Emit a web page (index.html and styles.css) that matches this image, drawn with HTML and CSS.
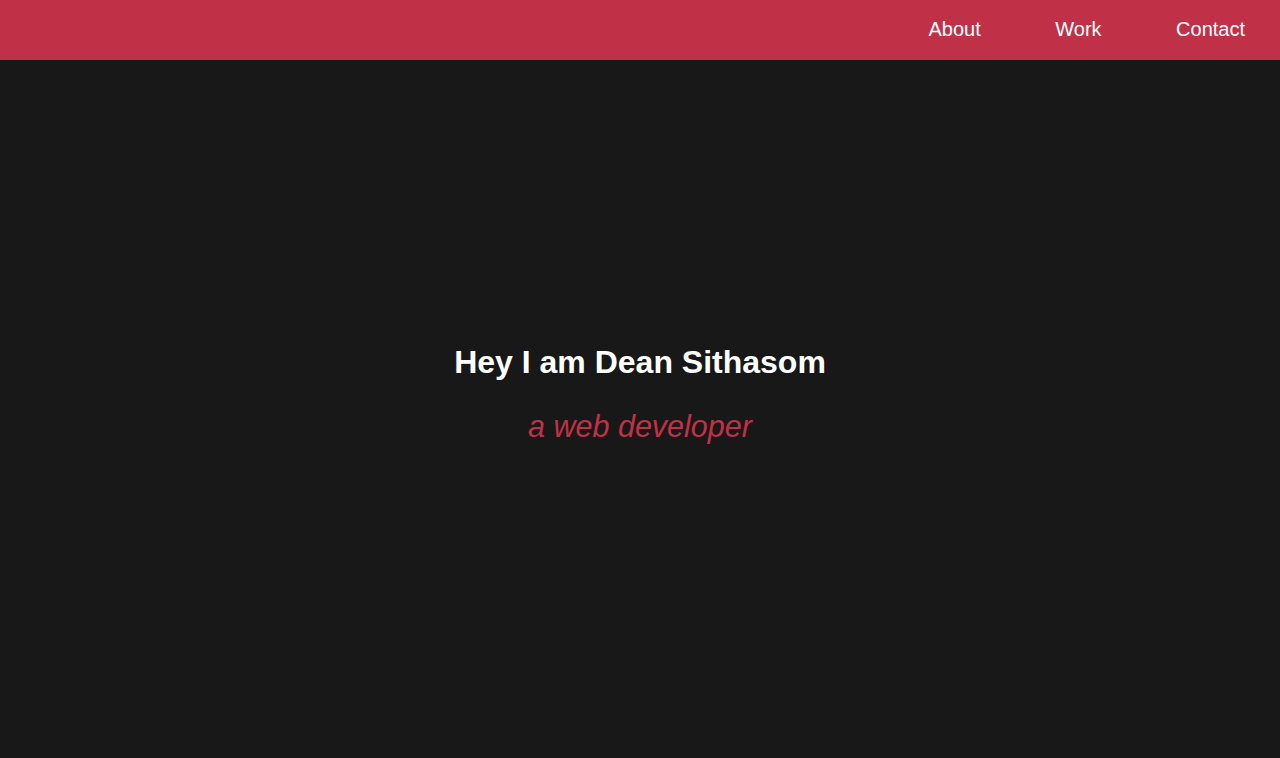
FILE: index.html
```html
<!DOCTYPE html>
<html lang="en">
<head>
<meta charset="utf-8">
<title>Dean Sithasom</title>
<link rel="stylesheet" href="styles.css">
</head>
<body>
<header class="topbar">
  <nav class="nav">
    <a class="nav-link" href="#">About</a>
    <a class="nav-link" href="#">Work</a>
    <a class="nav-link" href="#">Contact</a>
  </nav>
</header>
<main class="hero">
  <h1 class="hero-title">Hey I am Dean Sithasom</h1>
  <p class="hero-sub">a web developer</p>
</main>
</body>
</html>
```
FILE: styles.css
```css
html, body {
  margin: 0;
  padding: 0;
  height: 100%;
}
body {
  background: #181818;
  font-family: "Liberation Sans", Arial, Helvetica, sans-serif;
  display: flex;
  flex-direction: column;
}
.topbar {
  height: 60px;
  background: #c03148;
  display: flex;
  justify-content: flex-end;
  align-items: center;
  flex: 0 0 auto;
}
.nav {
  display: flex;
  padding-right: 35px;
  gap: 74.5px;
}
.nav-link {
  color: #ffffff;
  text-decoration: none;
  font-size: 20px;
  line-height: 24px;
  margin-top: -2px;
}
.hero {
  flex: 1 1 auto;
  display: flex;
  flex-direction: column;
  align-items: center;
  justify-content: center;
  padding-bottom: 32px;
}
.hero-title {
  margin: 0;
  color: #ffffff;
  font-size: 32px;
  font-weight: bold;
  line-height: 40px;
}
.hero-sub {
  margin: 26px 0 0;
  color: #c03148;
  font-size: 30.5px;
  font-style: italic;
  font-weight: 300;
  line-height: 36px;
}
```
